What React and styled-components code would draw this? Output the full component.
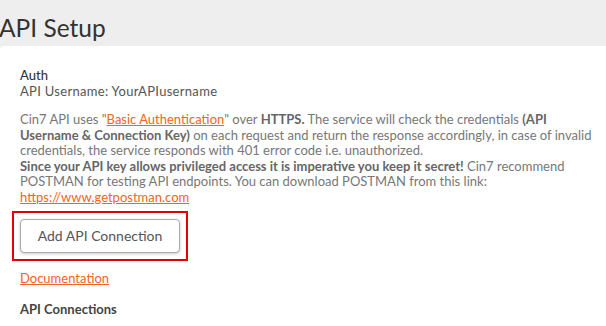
import styled, { createGlobalStyle } from "styled-components";

const Global = createGlobalStyle`
  body {
    margin: 0;
    background: #ffffff;
    font-family: Lato, "Open Sans", sans-serif;
  }
`;

function App() {
  return (
    <>
      <Global />
      <Page>
        <Header>
          <Title>API Setup</Title>
        </Header>
        <Card>
          <Section>
            <Label>Auth</Label>
            <Username>API Username: YourAPIusername</Username>
          </Section>
          <Info>
            Cin7 API uses "<Link href="#">Basic Authentication</Link>" over <b>HTTPS.</b> The service
            will check the credentials <b>(API</b>
            <br />
            <b>Username &amp; Connection Key)</b> on each request and return the response accordingly,
            in case of invalid
            <br />
            credentials, the service responds with 401 error code i.e. unauthorized.
            <br />
            <b>Since your API key allows privileged access it is imperative you keep it secret!</b> Cin7
            recommend
            <br />
            POSTMAN for testing API endpoints. You can download POSTMAN from this link:
            <br />
            <Link href="#">https://www.getpostman.com</Link>
          </Info>
          <Highlight>
            <Button>Add API Connection</Button>
          </Highlight>
          <DocLink href="#">Documentation</DocLink>
          <SubTitle>API Connections</SubTitle>
        </Card>
      </Page>
    </>
  );
}

const Page = styled.div`
  width: 606px;
  height: 326px;
  overflow: hidden;
  background: #eeeeee;
`;

const Header = styled.div`
  height: 46px;
  background: #eeeeee;
`;

const Title = styled.h1`
  margin: 0 0 0 -1px;
  padding-top: 13px;
  font-size: 24.5px;
  line-height: normal;
  font-weight: 400;
  color: #333333;
`;

const Card = styled.div`
  background: #ffffff;
  border-radius: 4px 0 0 0;
  padding: 21px 20px 0 20px;
  height: 280px;
`;

const Section = styled.div`
  font-size: 13px;
  line-height: 16px;
  color: #333333;
`;

const Label = styled.div`
  font-weight: 500;
`;

const Username = styled.div`
  color: #555555;
  letter-spacing: 0.3px;
`;

const Info = styled.p`
  margin: 13px 0 0 0;
  white-space: nowrap;
  font-size: 13px;
  line-height: 15.6px;
  color: #777777;

  b {
    color: #666666;
    font-weight: 700;
  }
`;

const Link = styled.a`
  color: #f26522;
  text-decoration: underline;
`;

const Highlight = styled.div`
  display: inline-block;
  margin: 5px 0 0 -8px;
  padding: 6px;
  border: 2px solid #e60000;
`;

const Button = styled.button`
  width: 160px;
  height: 34px;
  background: #ffffff;
  border: 1px solid #aaaaaa;
  border-radius: 4px;
  box-shadow: 0 1px 3px rgba(0, 0, 0, 0.2);
  font-family: Lato, sans-serif;
  font-size: 14px;
  color: #555555;
`;

const DocLink = styled.a`
  display: block;
  margin-top: 9px;
  font-size: 13px;
  color: #f26522;
  text-decoration: underline;
`;

const SubTitle = styled.div`
  margin-top: 15px;
  font-size: 13px;
  font-weight: 700;
  color: #444444;
`;

export default App;
